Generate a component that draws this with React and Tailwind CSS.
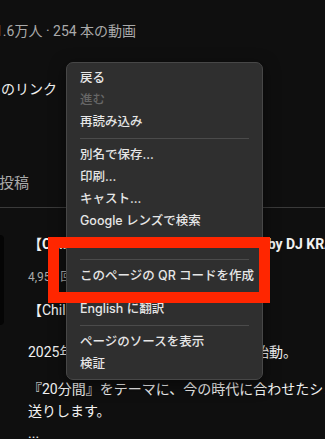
import React from "react";

const items1 = [
  { t: "戻る" },
  { t: "進む", d: true },
  { t: "再読み込み" },
];
const items2 = [
  { t: "別名で保存..." },
  { t: "印刷..." },
  { t: "キャスト..." },
  { t: "Google レンズで検索" },
];

function Item({ t, d }) {
  return (
    <div
      className={
        "h-[22px] px-[13px] flex items-center whitespace-nowrap text-[12.5px] font-medium " +
        (d ? "text-[#666666]" : "text-[#e6e6e6]")
      }
    >
      {t}
    </div>
  );
}

function HiddenItem({ t }) {
  return (
    <div className="h-[22px] px-[13px] flex items-end pb-[5px] whitespace-nowrap text-[11px] leading-none font-medium text-[#e6e6e6]">
      {t}
    </div>
  );
}

function Sep() {
  return (
    <div className="h-[11px] flex items-center px-[13px]">
      <div className="h-px w-full bg-[#4b4b4b]" />
    </div>
  );
}

export default function App() {
  return (
    <div className="relative w-[325px] h-[439px] overflow-hidden bg-[#0f0f0f] font-['Roboto','Noto_Sans_CJK_JP',sans-serif]">
      <div className="flex flex-col">
        <div className="mt-[21px] ml-[-5px] h-[20px] leading-[20px] text-[14px] text-[#aaaaaa] whitespace-nowrap">
          1.6万人 · 254 本の動画
        </div>
        <div className="mt-[38px] ml-[-13px] h-[20px] leading-[20px] text-[14px] text-[#f1f1f1] whitespace-nowrap">
          ーのリンク
        </div>
        <div className="mt-[73px] ml-[-1px] h-[22px] leading-[22px] text-[15px] text-[#aaaaaa] whitespace-nowrap">
          投稿
        </div>
        <div className="mt-[13px] h-px bg-[#3a3a3a]" />
        <div className="flex">
          <div className="mt-[27px] w-[4px] h-[90px] rounded-r-[4px] bg-[#050505] shrink-0" />
          <div className="ml-[24px] flex flex-col whitespace-nowrap">
            <div className="mt-[25px] h-[22px] leading-[22px] text-[14px] font-bold text-[#f1f1f1]">
              【Chill Out】作業用 BGM 20分間 Mix <span className="ml-[4px]">by DJ KRAZY</span>
            </div>
            <div className="mt-[13px] h-[18px] leading-[18px] text-[12px] text-[#aaaaaa]">
              4,958 回視聴 · 2 日前
            </div>
            <div className="mt-[13px] h-[22px] leading-[22px] text-[14px] text-[#f1f1f1]">
              【Chill Out】作業用 BGM 20分間
            </div>
            <div className="mt-[20px] h-[22px] leading-[22px] text-[14px] text-[#f1f1f1]">
              2025年、新プロジェクトがいよいよ始動。
            </div>
            <div className="mt-[15px] h-[22px] leading-[22px] text-[14px] text-[#f1f1f1]">
              『20分間』をテーマに、今の時代に合わせたシンプルな音楽をお
            </div>
            <div className="h-[22px] leading-[22px] text-[14px] text-[#f1f1f1]">
              送りします。
            </div>
            <div className="h-[22px] leading-[22px] text-[14px] text-[#f1f1f1]">
              ...
            </div>
          </div>
        </div>
      </div>

      <div className="absolute left-[66px] top-[62px] w-[197px] py-[4px] bg-[#2f2f2f] border border-[#474747] rounded-[7px] shadow-[0_4px_16px_rgba(0,0,0,0.5)] flex flex-col font-['Inter','Noto_Sans_CJK_JP',sans-serif]">
        {items1.map((i) => (
          <Item key={i.t} {...i} />
        ))}
        <Sep />
        {items2.map((i) => (
          <Item key={i.t} {...i} />
        ))}
        <HiddenItem t="読み上げモードで開く" />
        <Sep />
        <Item t="このページの QR コードを作成" />
        <Sep />
        <Item t="English に翻訳" />
        <Sep />
        <Item t="ページのソースを表示" />
        <Item t="検証" />
      </div>

      <div className="absolute left-[48px] top-[237px] w-[222px] h-[66px] border-[11px] border-[#ff2600]" />
    </div>
  );
}
